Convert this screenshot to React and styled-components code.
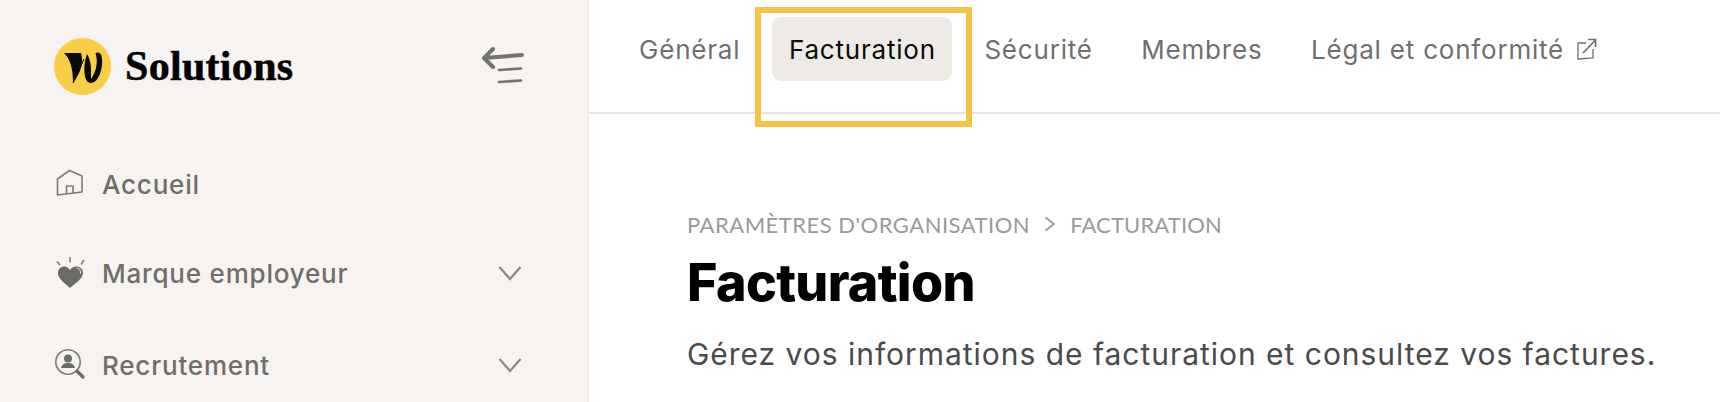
import React from "react";
import styled, { createGlobalStyle } from "styled-components";

const GlobalStyle = createGlobalStyle`
  html, body {
    margin: 0;
    padding: 0;
    background: #fff;
    overflow: hidden;
  }
  * {
    box-sizing: border-box;
  }
`;

const HomeIcon = () => (
  <svg width="32" height="32" viewBox="0 0 32 32" fill="none" stroke="#7b7b78" strokeWidth="1.6" strokeLinejoin="round">
    <path d="M3.5 11 L15.5 2.5 L28 8 L28 24 L3.5 27 Z" />
    <path d="M12.5 26 L12.5 18 L19 18 L19 25" />
  </svg>
);

const HeartIcon = () => (
  <svg width="32" height="32" viewBox="0 0 32 32" fill="none">
    <path d="M16 31 C11 26 4 22 4 16 C4 11 8 9 11 9.500 C13.500 10 15 11.500 16 13 C17.500 10.500 20 9 23 9.500 C27 10 29 13 29 16 C29 22 21 26 16 31 Z" fill="#6b6b69" />
    <path d="M23 11 C25.500 11.500 27 13.500 26.500 16.500" stroke="#f6f3f0" strokeWidth="1" />
    <path d="M16 0 L16 5.500 M3 4.500 L6 8 M30 3 L27 7.500" stroke="#7b7b78" strokeWidth="1.500" />
  </svg>
);

const SearchPersonIcon = () => (
  <svg width="32" height="32" viewBox="0 0 32 32" fill="none">
    <circle cx="14" cy="13" r="12.200" stroke="#7b7b78" strokeWidth="1.600" />
    <circle cx="14" cy="9.500" r="4" fill="#6b6b69" />
    <path d="M7 19 C8 15 11 14 14 14 C17 14 20 15 21 19 Z" fill="#6b6b69" />
    <path d="M23 22 L29 28" stroke="#6b6b69" strokeWidth="3.200" strokeLinecap="round" />
  </svg>
);

const Chevron = () => (
  <svg width="24" height="16" viewBox="0 0 24 16" fill="none" stroke="#8a8a87" strokeWidth="2.200">
    <path d="M1.500 2 L12 14 L22.500 2" />
  </svg>
);

const CollapseIcon = () => (
  <svg width="44" height="40" viewBox="0 0 44 40" fill="none" stroke="#737371" strokeLinecap="round">
    <path d="M41 9 L3 12 M12 3 L3 12 L12 21" strokeWidth="4" strokeLinejoin="round" />
    <path d="M18 24 L40 22.500 M18 36 L40 34.500" strokeWidth="2.600" />
  </svg>
);

const ExternalIcon = () => (
  <svg width="20" height="22" viewBox="0 0 20 22" fill="none" stroke="#6f6f6f" strokeWidth="1.300">
    <path d="M9 5 L1 5 L1 21 L16 20 L16 11" />
    <path d="M6 15 L18.500 2 M11 1.500 L18.500 1.500 L18.500 9" strokeWidth="1.700" />
  </svg>
);

const LogoMark = () => (
  <svg width="57" height="57" viewBox="0 0 57 57">
    <circle cx="28.500" cy="28.500" r="28.500" fill="#f8ce47" />
    <path d="M10 15 L27 15 C29.500 24 28 33 19 45 C19 32 17 22 10 15 Z" fill="#0a0a0a" />
    <path d="M19 45 L30 21" stroke="#0a0a0a" strokeWidth="1" fill="none" />
    <path d="M33 16 C29 27 29 45 37 45 C45 45 50 28 47.500 18 C47 14.500 43 13.500 41.500 15.500 C44 22 43 33 37 41 C37 33 38 24 33 16 Z" fill="#0a0a0a" />
  </svg>
);

const NAV = [
  { label: "Accueil", Icon: HomeIcon },
  { label: "Marque employeur", Icon: HeartIcon, more: true },
  { label: "Recrutement", Icon: SearchPersonIcon, more: true },
];

const TABS = [
  { label: "Général" },
  { label: "Facturation", active: true },
  { label: "Sécurité" },
  { label: "Membres" },
  { label: "Légal et conformité", external: true },
];

export default function App() {
  return (
    <>
      <GlobalStyle />
      <Page>
        <Sidebar>
          <SidebarTop>
            <Brand>
              <LogoMark />
              <BrandName>Solutions</BrandName>
            </Brand>
            <CollapseButton>
              <CollapseIcon />
            </CollapseButton>
          </SidebarTop>
          <Nav>
            {NAV.map(({ label, Icon, more }) => (
              <NavItem key={label}>
                <NavIcon>
                  <Icon />
                </NavIcon>
                <NavLabel>{label}</NavLabel>
                {more && <Chevron />}
              </NavItem>
            ))}
          </Nav>
        </Sidebar>
        <Main>
          <Tabs>
            {TABS.map((tab) => (
              <Tab key={tab.label} $active={tab.active}>
                {tab.label}
                {tab.external && <ExternalIcon />}
              </Tab>
            ))}
            <Highlight />
          </Tabs>
          <Content>
            <Breadcrumb>
              <Crumb $spacing="0.5px">Paramètres d'organisation</Crumb>
              <svg width="12" height="16" viewBox="0 0 12 16" fill="none" stroke="#9a9a9a" strokeWidth="1.800">
                <path d="M1.500 1.500 L10 8 L1.500 14.500" />
              </svg>
              <Crumb $spacing="0.15px">Facturation</Crumb>
            </Breadcrumb>
            <Title>Facturation</Title>
            <Description>Gérez vos informations de facturation et consultez vos factures.</Description>
          </Content>
        </Main>
      </Page>
    </>
  );
}

const Page = styled.div`
  display: flex;
  width: 1720px;
  height: 402px;
  overflow: hidden;
  font-family: "Inter", "Liberation Sans", sans-serif;
`;
const Sidebar = styled.aside`
  flex: 0 0 589px;
  background: #f6f3f0;
  border-right: 2px solid #eeeceb;
  padding: 38px 65px 0 54px;
`;
const SidebarTop = styled.div`
  display: flex;
  align-items: flex-start;
  justify-content: space-between;
  height: 57px;
`;
const Brand = styled.div`
  display: flex;
  align-items: center;
  gap: 14px;
`;
const BrandName = styled.span`
  font-family: "Liberation Serif", serif;
  font-weight: 700;
  font-size: 42px;
  letter-spacing: 0.3px;
  -webkit-text-stroke: 0.5px #000;
  color: #000;
  line-height: 57px;
`;
const CollapseButton = styled.div`
  margin: 8px -3px 0 0;
  height: 40px;
`;
const Nav = styled.nav`
  display: flex;
  flex-direction: column;
  gap: 57px;
  margin-top: 73px;
`;
const NavItem = styled.div`
  display: flex;
  align-items: center;
  height: 32px;

  &:nth-child(3) {
    margin-top: 3px;
  }
`;
const NavIcon = styled.span`
  display: flex;
  width: 48px;
`;
const NavLabel = styled.span`
  flex: 1;
  font-size: 26px;
  font-weight: 500;
  letter-spacing: 0.8px;
  color: #6e6e6a;
`;
const Main = styled.main`
  flex: 1;
  min-width: 0;
`;
const Tabs = styled.div`
  position: relative;
  display: flex;
  gap: 15px;
  height: 114px;
  padding: 17px 0 0 33px;
  border-bottom: 2px solid #e5e5e5;
`;
const Tab = styled.div`
  display: flex;
  align-items: center;
  gap: 13px;
  height: 64px;
  padding: 0 16.500px 0 17px;
  border-radius: 9px;
  font-size: 26px;
  letter-spacing: 0.8px;
  color: ${(props) => (props.$active ? "#0b0b0b" : "#6f6f6f")};
  background: ${(props) => (props.$active ? "#eeebe6" : "transparent")};
`;
const Highlight = styled.div`
  position: absolute;
  left: 166px;
  top: 7px;
  width: 217px;
  height: 120px;
  border: 6px solid #f6c344;
`;
const Content = styled.div`
  padding: 96px 0 0 98px;
`;
const Breadcrumb = styled.div`
  display: flex;
  align-items: center;
  gap: 14px;
  height: 28px;
  font-family: "Lato", sans-serif;
  font-size: 22px;
  color: #9a9a9a;
  text-transform: uppercase;
`;
const Crumb = styled.span`
  letter-spacing: ${(props) => props.$spacing};
`;
const Title = styled.h1`
  margin: 14px 0 0;
  font-size: 52px;
  font-weight: 800;
  line-height: 62px;
  letter-spacing: -0.7px;
  color: #000;
`;
const Description = styled.p`
  margin: 22px 0 0;
  font-size: 30px;
  line-height: 36px;
  letter-spacing: 0.97px;
  color: #4a4a4a;
  white-space: nowrap;
`;
